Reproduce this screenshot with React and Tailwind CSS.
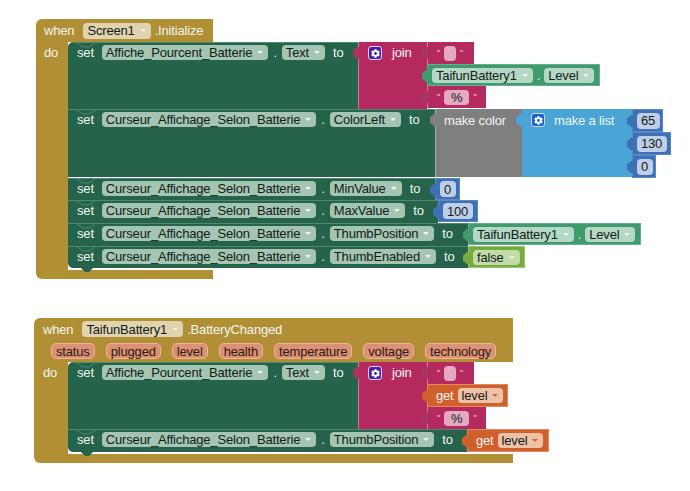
import { FaCog } from 'react-icons/fa'

const font = { fontFamily: '"Liberation Sans", Arial, sans-serif' }

function Arrow({ color = 'border-t-[#eef5f0]' }) {
  return <span className={`ml-[5px] mr-[5px] inline-block h-0 w-0 border-x-[3px] border-t-[3px] border-x-transparent ${color}`} />
}

function Pill({ children, tone = 'bg-[#a3c5b2]', arrow = true, arrowColor, className = '' }) {
  return (
    <span className={`flex h-[15px] items-center rounded-[4px] pl-[4px] text-[#101c16] ${tone} ${className}`}>
      {children}
      {arrow ? <Arrow color={arrowColor} /> : <span className="w-[4px]" />}
    </span>
  )
}

function Lbl({ children, className = '' }) {
  return <span className={`text-[#f2f5f3] ${className}`}>{children}</span>
}

// puzzle tab sticking out of the left side of a value block
function Tab({ color, top = 5 }) {
  return (
    <svg className="absolute left-[-6px]" style={{ top }} width="6" height="12" viewBox="0 0 6 12">
      <path d="M6 0 L3 0 L3 1.5 Q0 2 0 4 L0 8 Q0 10 3 10.5 L3 12 L6 12 Z" fill={color} />
    </svg>
  )
}

// notch at the top of a statement, bump at the bottom of the last one
function Notch() {
  return (
    <svg className="absolute left-[8px] top-0" width="20" height="5" viewBox="0 0 20 5">
      <path d="M1 0 L7 4 L13 4 L19 0" fill="none" stroke="#4f8a70" strokeWidth="1" />
    </svg>
  )
}

function Bump({ color = '#25634a' }) {
  return (
    <svg className="absolute bottom-[-4px] left-[12px]" width="14" height="4" viewBox="0 0 14 4">
      <path d="M1 0 L5 4 L9 4 L13 0 Z" fill={color} />
    </svg>
  )
}

function Gear({ tone }) {
  return (
    <span className={`flex h-[14px] w-[14px] items-center justify-center rounded-[3px] border border-[#d9d4ee] ${tone}`}>
      <FaCog className="text-white" size={9} />
    </span>
  )
}

function SetRow({ comp, prop, width, height = 'h-[23px]', first, last, children }) {
  return (
    <div className="flex items-stretch">
      <div className={`relative shrink-0 border-t border-[#4f8a70] bg-[#25634a] pl-[9px] ${width} ${height} ${first ? 'rounded-tl-[5px]' : ''} ${last ? 'rounded-bl-[5px]' : ''}`}>
        <Notch />
        {last && <Bump />}
        <div className="flex h-[19px] items-center">
          <Lbl className="mr-[8px]">set</Lbl>
          <div className="mr-[8px] flex items-center">
            <Pill>{comp}</Pill>
            <Lbl className="mx-[5px]">.</Lbl>
            <Pill>{prop}</Pill>
          </div>
          <Lbl>to</Lbl>
        </div>
      </div>
      {children}
    </div>
  )
}

function NumBlock({ children, width, h = 'h-[22px]' }) {
  return (
    <div className={`relative flex items-center border border-[#5a88c4] bg-[#3e70b6] pl-[4px] ${width} ${h}`}>
      <Tab color="#3e70b6" />
      <Pill tone="bg-[#c0cfe8]" arrow={false} className="h-[16px] px-[1px]">{children}</Pill>
    </div>
  )
}

function TextBlock({ children, width, pad = 'px-[3px]' }) {
  return (
    <div className={`relative flex h-[22px] items-center gap-[4px] border-l border-[#d77a9d] bg-[#b42a5f] pl-[9px] ${width}`}>
      <Tab color="#a83462" />
      <span className="text-[9px] leading-none text-[#f1d5e0]">"</span>
      <span className={`flex h-[15px] min-w-[12px] items-center justify-center rounded-[4px] bg-[#e3aac1] text-[#101c16] ${pad}`}>{children}</span>
      <span className="text-[9px] leading-none text-[#f1d5e0]">"</span>
    </div>
  )
}

function GetBlock({ width }) {
  return (
    <div className={`relative flex h-[23px] items-center gap-[4px] border border-[#e08a5c] bg-[#cf602c] pl-[8px] ${width}`}>
      <Tab color="#cf602c" />
      <Lbl>get</Lbl>
      <Pill tone="bg-[#edc2a8]" arrowColor="border-t-[#c9683a]">level</Pill>
    </div>
  )
}

function JoinCell({ second }) {
  return (
    <div className="flex items-stretch">
      <div className="relative flex h-[67px] w-[69px] gap-[10px] border-l border-[#d77a9d] bg-[#b42a5f] pl-[9px] pt-[4px]">
        <Tab color="#a83462" top={5} />
        <Gear tone="bg-[#4a1fae]" />
        <Lbl className="leading-[14px]">join</Lbl>
      </div>
      <div className="flex flex-col">
        <TextBlock width="w-[47px]" />
        {second}
        <TextBlock width="w-[59px]" pad="px-[7px]">%</TextBlock>
      </div>
    </div>
  )
}

function BatteryLevel({ width }) {
  return (
    <div className={`relative flex h-[22px] items-center border border-[#65b08c] bg-[#3f9a6c] pl-[4px] ${width}`}>
      <Tab color="#3f9a6c" />
      <Pill tone="bg-[#b4d8c5]">TaifunBattery1</Pill>
      <Lbl className="mx-[4px]">.</Lbl>
      <Pill tone="bg-[#b4d8c5]">Level</Pill>
    </div>
  )
}

function ListItem({ width, children }) {
  return <NumBlock width={width} h="h-[23px]">{children}</NumBlock>
}

function MakeColor() {
  return (
    <div className="flex items-stretch">
      <div className="relative h-[68px] w-[87px] border-l border-[#aaaaaa] bg-[#7f7f7f] pl-[8px] pt-[4px]">
        <Tab color="#7f7f7f" top={5} />
        <Lbl>make color</Lbl>
      </div>
      <div className="relative flex h-[68px] w-[110px] items-start gap-[9px] bg-[#49a5d6] pl-[9px] pt-[4px]">
        <Tab color="#49a5d6" top={5} />
        <Gear tone="bg-[#1763d6]" />
        <Lbl className="leading-[15px]">make a list</Lbl>
      </div>
      <div className="flex flex-col">
        <ListItem width="w-[31px]">65</ListItem>
        <ListItem width="w-[39px]">130</ListItem>
        <ListItem width="w-[24px]">0</ListItem>
      </div>
    </div>
  )
}

const curseur = 'Curseur_Affichage_Selon_Batterie'
const affiche = 'Affiche_Pourcent_Batterie'

function Initialize() {
  return (
    <div className="ml-[36px] mt-[19px]">
      <div className="flex h-[23px] w-[177px] items-center rounded-tl-[6px] bg-[#b18f35] pl-[8px]">
        <Lbl>when</Lbl>
        <Pill tone="bg-[#dfd3b0]" className="ml-[9px] h-[16px]" arrowColor="border-t-[#f3eddc]">Screen1</Pill>
        <Lbl className="ml-[4px]">.Initialize</Lbl>
      </div>
      <div className="flex">
        <div className="w-[32px] shrink-0 bg-[#b18f35] pl-[8px] pt-[3px]">
          <Lbl>do</Lbl>
        </div>
        <div className="flex flex-col pb-[2px]">
          <SetRow comp={affiche} prop="Text" width="w-[290px]" height="h-[67px]" first>
            <JoinCell second={<BatteryLevel width="w-[173px]" />} />
          </SetRow>
          <SetRow comp={curseur} prop="ColorLeft" width="w-[367px]" height="h-[68px]">
            <MakeColor />
          </SetRow>
          <SetRow comp={curseur} prop="MinValue" width="w-[367px]" height="h-[22px]">
            <NumBlock width="w-[25px]">0</NumBlock>
          </SetRow>
          <SetRow comp={curseur} prop="MaxValue" width="w-[370px]">
            <NumBlock width="w-[40px]">100</NumBlock>
          </SetRow>
          <SetRow comp={curseur} prop="ThumbPosition" width="w-[400px]">
            <BatteryLevel width="w-[173px]" />
          </SetRow>
          <SetRow comp={curseur} prop="ThumbEnabled" width="w-[400px]" height="h-[22px]" last>
            <div className="relative flex h-[22px] w-[57px] items-center border border-[#9cc26d] bg-[#77aa3f] pl-[4px]">
              <Tab color="#77aa3f" />
              <Pill tone="bg-[#c3dba6]" arrowColor="border-t-[#eef5e4]">false</Pill>
            </div>
          </SetRow>
        </div>
      </div>
      <div className="h-[9px] w-[177px] rounded-bl-[6px] bg-[#b18f35]" />
    </div>
  )
}

function BatteryChanged() {
  const params = ['status', 'plugged', 'level', 'health', 'temperature', 'voltage', 'technology']
  return (
    <div className="ml-[34px] mt-[39px]">
      <div className="w-[479px] rounded-tl-[6px] bg-[#b18f35] pl-[9px]">
        <div className="flex h-[22px] items-center">
          <Lbl>when</Lbl>
          <Pill tone="bg-[#dfd3b0]" className="ml-[9px] h-[16px]" arrowColor="border-t-[#f3eddc]">TaifunBattery1</Pill>
          <Lbl className="ml-[4px]">.BatteryChanged</Lbl>
        </div>
        <div className="flex h-[22px] items-center gap-[11px] pl-[8px]">
          {params.map((p) => (
            <span key={p} className="flex h-[16px] items-center rounded-[5px] border border-[#eeb59c] bg-[#dc9177] px-[4px] text-[#2a1a12]">{p}</span>
          ))}
        </div>
      </div>
      <div className="flex">
        <div className="w-[34px] shrink-0 bg-[#b18f35] pl-[9px] pt-[3px]">
          <Lbl>do</Lbl>
        </div>
        <div className="flex flex-col pb-[2px]">
          <SetRow comp={affiche} prop="Text" width="w-[290px]" height="h-[67px]" first>
            <JoinCell second={<GetBlock width="w-[81px]" />} />
          </SetRow>
          <SetRow comp={curseur} prop="ThumbPosition" width="w-[399px]" last>
            <GetBlock width="w-[82px]" />
          </SetRow>
        </div>
      </div>
      <div className="h-[9px] w-[479px] rounded-bl-[6px] bg-[#b18f35]" />
    </div>
  )
}

export default function App() {
  return (
    <div className="h-[491px] w-[690px] overflow-hidden bg-white text-[13px] leading-[15px] tracking-[-0.17px]" style={font}>
      <div className="flow-root">
        <Initialize />
        <BatteryChanged />
      </div>
    </div>
  )
}
